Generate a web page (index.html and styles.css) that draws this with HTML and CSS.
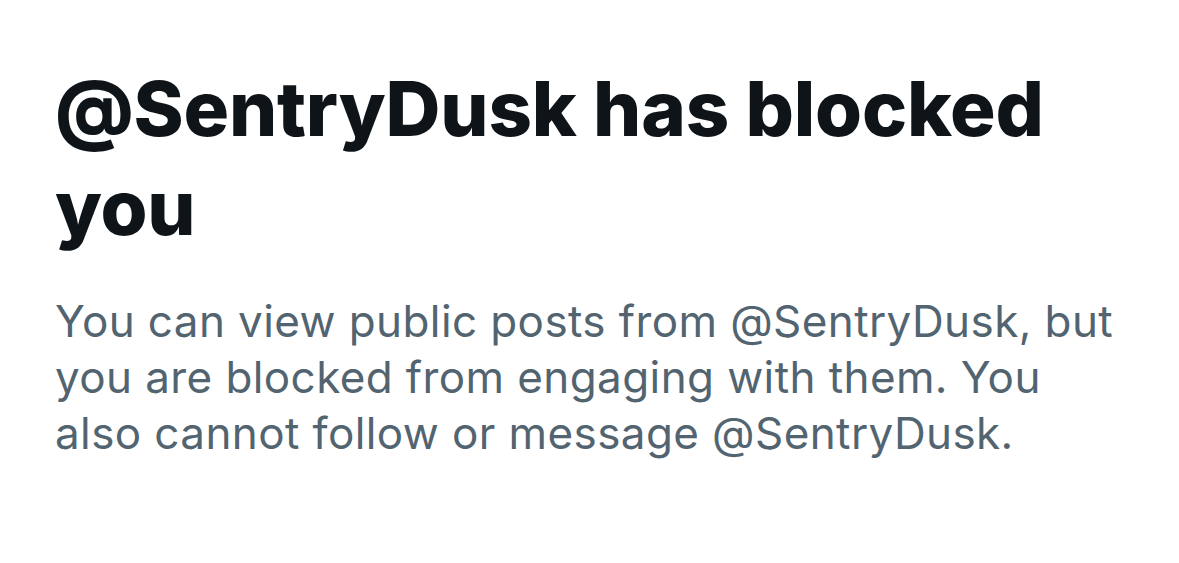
FILE: index.html
```html
<!DOCTYPE html>
<html>
<head>
<meta charset="utf-8">
<link rel="stylesheet" href="styles.css">
</head>
<body>
<main class="block-notice">
  <h1 class="title">@SentryDusk has blocked you</h1>
  <p class="desc">You can view public posts from @SentryDusk, but you are blocked from engaging with them. You also cannot follow or message @SentryDusk.</p>
</main>
</body>
</html>
```
FILE: styles.css
```css
html, body {
  margin: 0;
  padding: 0;
  background: #ffffff;
}
.block-notice {
  width: 1075px;
  padding: 59px 0 0 55px;
  display: flex;
  flex-direction: column;
  gap: 36px;
}
.title {
  margin: 0;
  font-family: Inter, "Liberation Sans", Arial, sans-serif;
  font-weight: 800;
  font-size: 76px;
  line-height: 99px;
  color: #0f1419;
  letter-spacing: -0.2px;
}
.desc {
  margin: 0;
  font-family: Inter, "Liberation Sans", Arial, sans-serif;
  font-weight: 400;
  font-size: 44px;
  line-height: 56px;
  color: #536471;
  letter-spacing: 0.4px;
}
```
